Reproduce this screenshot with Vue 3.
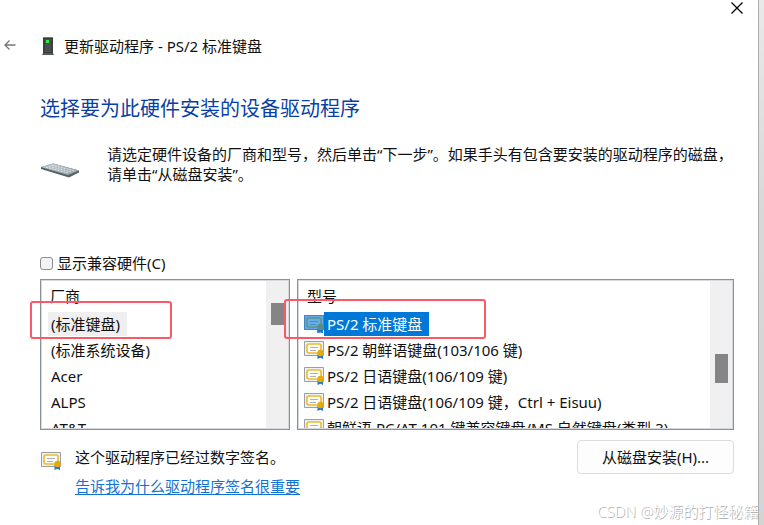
<template>
  <div class="desktop">
    <main class="wizard">
      <div class="titlebar">
        <button class="icon-btn close" aria-label="关闭">
          <svg width="14" height="14" viewBox="0 0 14 14">
            <path d="M1.5 1.5l11 11M12.5 1.5l-11 11" stroke="#000" stroke-width="1.3" fill="none" />
          </svg>
        </button>
      </div>

      <header class="nav">
        <button class="icon-btn back" aria-label="返回">
          <svg width="12" height="12" viewBox="0 0 12 12">
            <path d="M11.5 5H1M5.500.5L1 5l4.500 4.500" stroke="#777" stroke-width="1.300" fill="none" />
          </svg>
        </button>
        <svg class="device" width="12" height="20" viewBox="0 0 12 20">
          <path d="M1 1h10v16H1z" fill="#3c3f40" />
          <path d="M1 1h10v1H1z" fill="#77797a" />
          <path d="M3 3h6v13H3z" fill="#4b4e4f" />
          <path d="M4 4h3v3H4z" fill="#2bf03c" />
          <path d="M1 17h10l1 2H0z" fill="#55585a" />
        </svg>
        <span>更新驱动程序 - PS/2 标准键盘</span>
      </header>

      <div class="content">
        <h1>选择要为此硬件安装的设备驱动程序</h1>

        <div class="intro">
          <svg class="keyboard" width="40" height="18" viewBox="0 0 40 18">
            <defs>
              <linearGradient id="keys" x1="0" y1="0" x2="1" y2="1">
                <stop offset="0" stop-color="#c3cbcf" />
                <stop offset="1" stop-color="#96a1a7" />
              </linearGradient>
            </defs>
            <path d="M0 5L12 1.500l26 7v2L28 15.500 0 7z" fill="#59646a" />
            <path d="M0 5L12 1.500l26 7L27 13z" fill="url(#keys)" />
            <path
              d="M5 5.200l22 5.800M8 4.200l22 5.800M11 3.200l22 5.600"
              stroke="#dde3e6"
              stroke-width="1"
              stroke-dasharray="2 1"
              fill="none"
            />
          </svg>
          <p>请选定硬件设备的厂商和型号，然后单击“下一步”。如果手头有包含要安装的驱动程序的磁盘，请单击“从磁盘安装”。</p>
        </div>

        <label class="compat">
          <input v-model="compatible" type="checkbox" />
          <span>显示兼容硬件(C)</span>
        </label>

        <div class="panes">
          <section class="pane vendors">
            <div class="list">
              <h2>厂商</h2>
              <ul role="listbox" aria-label="厂商">
                <li
                  v-for="name in vendors"
                  :key="name"
                  role="option"
                  :aria-selected="name === vendor"
                  @click="vendor = name"
                >
                  <span class="name">{{ name }}</span>
                </li>
              </ul>
              <div class="track"><div class="thumb"></div></div>
            </div>
            <div class="mark"></div>
          </section>

          <section class="pane models">
            <div class="list">
              <h2>型号</h2>
              <ul role="listbox" aria-label="型号">
                <li
                  v-for="name in models"
                  :key="name"
                  role="option"
                  :aria-selected="name === model"
                  @click="model = name"
                >
                  <svg class="cert" width="20" height="18" viewBox="0 0 20 18">
                    <use href="#cert" />
                    <path
                      v-if="name === model"
                      d="M0 0h20v15h-1v3h-6v-3H0z"
                      fill="#0078d7"
                      opacity=".6"
                    />
                  </svg>
                  <span class="name">{{ name }}</span>
                </li>
              </ul>
              <div class="track"><div class="thumb"></div></div>
            </div>
            <div class="mark"></div>
          </section>
        </div>

        <footer class="signed">
          <svg class="cert" width="20" height="18" viewBox="0 0 20 18">
            <g id="cert">
              <path d="M.5.5h19v14H.5z" fill="#eef1f4" stroke="#999fa5" />
              <rect x="3" y="3" width="14" height="9" rx="2" fill="#fffef8" stroke="#ecbb2c" stroke-width="1.600" />
              <path d="M6 6.500h8M6 9.500h6" stroke="#a9b1b9" />
              <path d="M13.500 13h5.500v5l-2.700-1.300-2.800 1.300z" fill="#2678c4" />
              <circle cx="16.500" cy="12" r="3.200" fill="#e5ab0c" />
            </g>
          </svg>
          <div class="notes">
            <p>这个驱动程序已经过数字签名。</p>
            <a href="#">告诉我为什么驱动程序签名很重要</a>
          </div>
          <button class="disk">从磁盘安装(H)...</button>
        </footer>
      </div>

      <div class="watermark">CSDN @妙源的打怪秘籍</div>
    </main>
  </div>
</template>

<script setup>
import { ref } from 'vue'

const vendors = ['(标准键盘)', '(标准系统设备)', 'Acer', 'ALPS', 'AT&T']
const models = [
  'PS/2 标准键盘',
  'PS/2 朝鲜语键盘(103/106 键)',
  'PS/2 日语键盘(106/109 键)',
  'PS/2 日语键盘(106/109 键，Ctrl + Eisuu)',
  '朝鲜语 PC/AT 101 键兼容键盘/MS 自然键盘(类型 3)',
]

const compatible = ref(false)
const vendor = ref(vendors[0])
const model = ref(models[0])
</script>

<style>
body {
  margin: 0;
  background: #dcdcdc;
}
</style>

<style scoped>
.desktop {
  min-height: 100vh;
  padding-right: 5px;
  display: flex;
  background: linear-gradient(#e9e9e9, #d8d8d8 40%, #d4d4d4);
  font-family: "Noto Sans", "Noto Sans CJK SC", sans-serif;
  font-size: 15px;
  line-height: 20px;
  color: #111;
}

.wizard {
  position: relative;
  flex: 1;
  min-width: 0;
  border-right: 1px solid #adadad;
  background: #fff;
}

h1,
h2,
p,
ul {
  margin: 0;
  padding: 0;
  font-weight: 400;
}

.icon-btn {
  display: flex;
  padding: 0;
  border: none;
  background: none;
}

.titlebar {
  display: flex;
  justify-content: flex-end;
  padding: 1px 14px 0 0;
}

.nav {
  display: flex;
  align-items: center;
  height: 20px;
  margin-top: 21px;
  padding-left: 4px;
}

.device {
  margin: 0 10px 0 26px;
}

.content {
  padding: 41px 24px 0 40px;
}

h1 {
  font-size: 20px;
  line-height: 24px;
  color: #0a3fa6;
}

.intro {
  display: flex;
  gap: 26px;
  margin-top: 23px;
}

.keyboard {
  flex: none;
  margin: 18px 0 0 1px;
}

.compat {
  display: inline-flex;
  align-items: center;
  gap: 4px;
  margin-top: 69px;
}

.compat input {
  appearance: none;
  width: 13px;
  height: 13px;
  margin: 0;
  border: 1px solid #8c8c8c;
  border-radius: 3px;
  background: #f3f3f3;
}

.compat input:checked {
  background: #0067c0;
}

.panes {
  display: grid;
  grid-template-columns: 250fr 437fr;
  gap: 7px;
  margin-top: 5px;
}

.pane {
  position: relative;
  min-width: 0;
}

.list {
  position: relative;
  height: 147px;
  overflow: hidden;
  border: 1px solid #8a909a;
  outline: 1px solid #d5d8dc;
  outline-offset: -2px;
  padding: 1px;
  white-space: nowrap;
}

h2 {
  padding-left: 8px;
  font-size: 15px;
  line-height: 30px;
}

li {
  display: flex;
  align-items: center;
  height: 26px;
}

.vendors li {
  padding-left: 6px;
}

.models li {
  padding-left: 5px;
}

.name {
  padding: 2px 7px 2px 3px;
}

.cert {
  flex: none;
}

.vendors [aria-selected="true"] .name {
  background: #efefef;
}

.models [aria-selected="true"] .name {
  background: #0078d7;
  color: #fff;
}

.track {
  position: absolute;
  top: 1px;
  right: 1px;
  bottom: 1px;
  width: 22px;
  background: #f0f0f0;
}

.thumb {
  width: 13px;
  height: 22px;
  margin: 22px 0 0 5px;
  background: #858585;
}

.models .thumb {
  height: 29px;
  margin-top: 73px;
}

.mark {
  position: absolute;
  top: 22px;
  left: -10px;
  width: 138px;
  height: 34px;
  border: 2px solid #fb5967;
  border-radius: 3px;
  pointer-events: none;
}

.models .mark {
  top: 20px;
  left: -13px;
  width: 198px;
  height: 36px;
}

.signed {
  display: flex;
  align-items: flex-start;
  margin-top: 10px;
}

.signed .cert {
  margin: 12px 14px 0 1px;
}

.notes {
  display: grid;
  gap: 9px;
  margin-top: 7px;
}

.notes a {
  color: #1272d2;
  text-underline-offset: 2px;
}

.disk {
  width: 157px;
  height: 34px;
  margin-left: auto;
  border: 1px solid #dcdcdc;
  border-radius: 4px;
  background: #fdfdfd;
  font: inherit;
  color: inherit;
}

.watermark {
  position: absolute;
  right: 0;
  bottom: 4px;
  font-family: "Open Sans", "Noto Sans CJK SC", sans-serif;
  font-weight: 300;
  color: #fff;
  text-shadow: 1px 1px 0 #aaa;
  white-space: nowrap;
}
</style>
